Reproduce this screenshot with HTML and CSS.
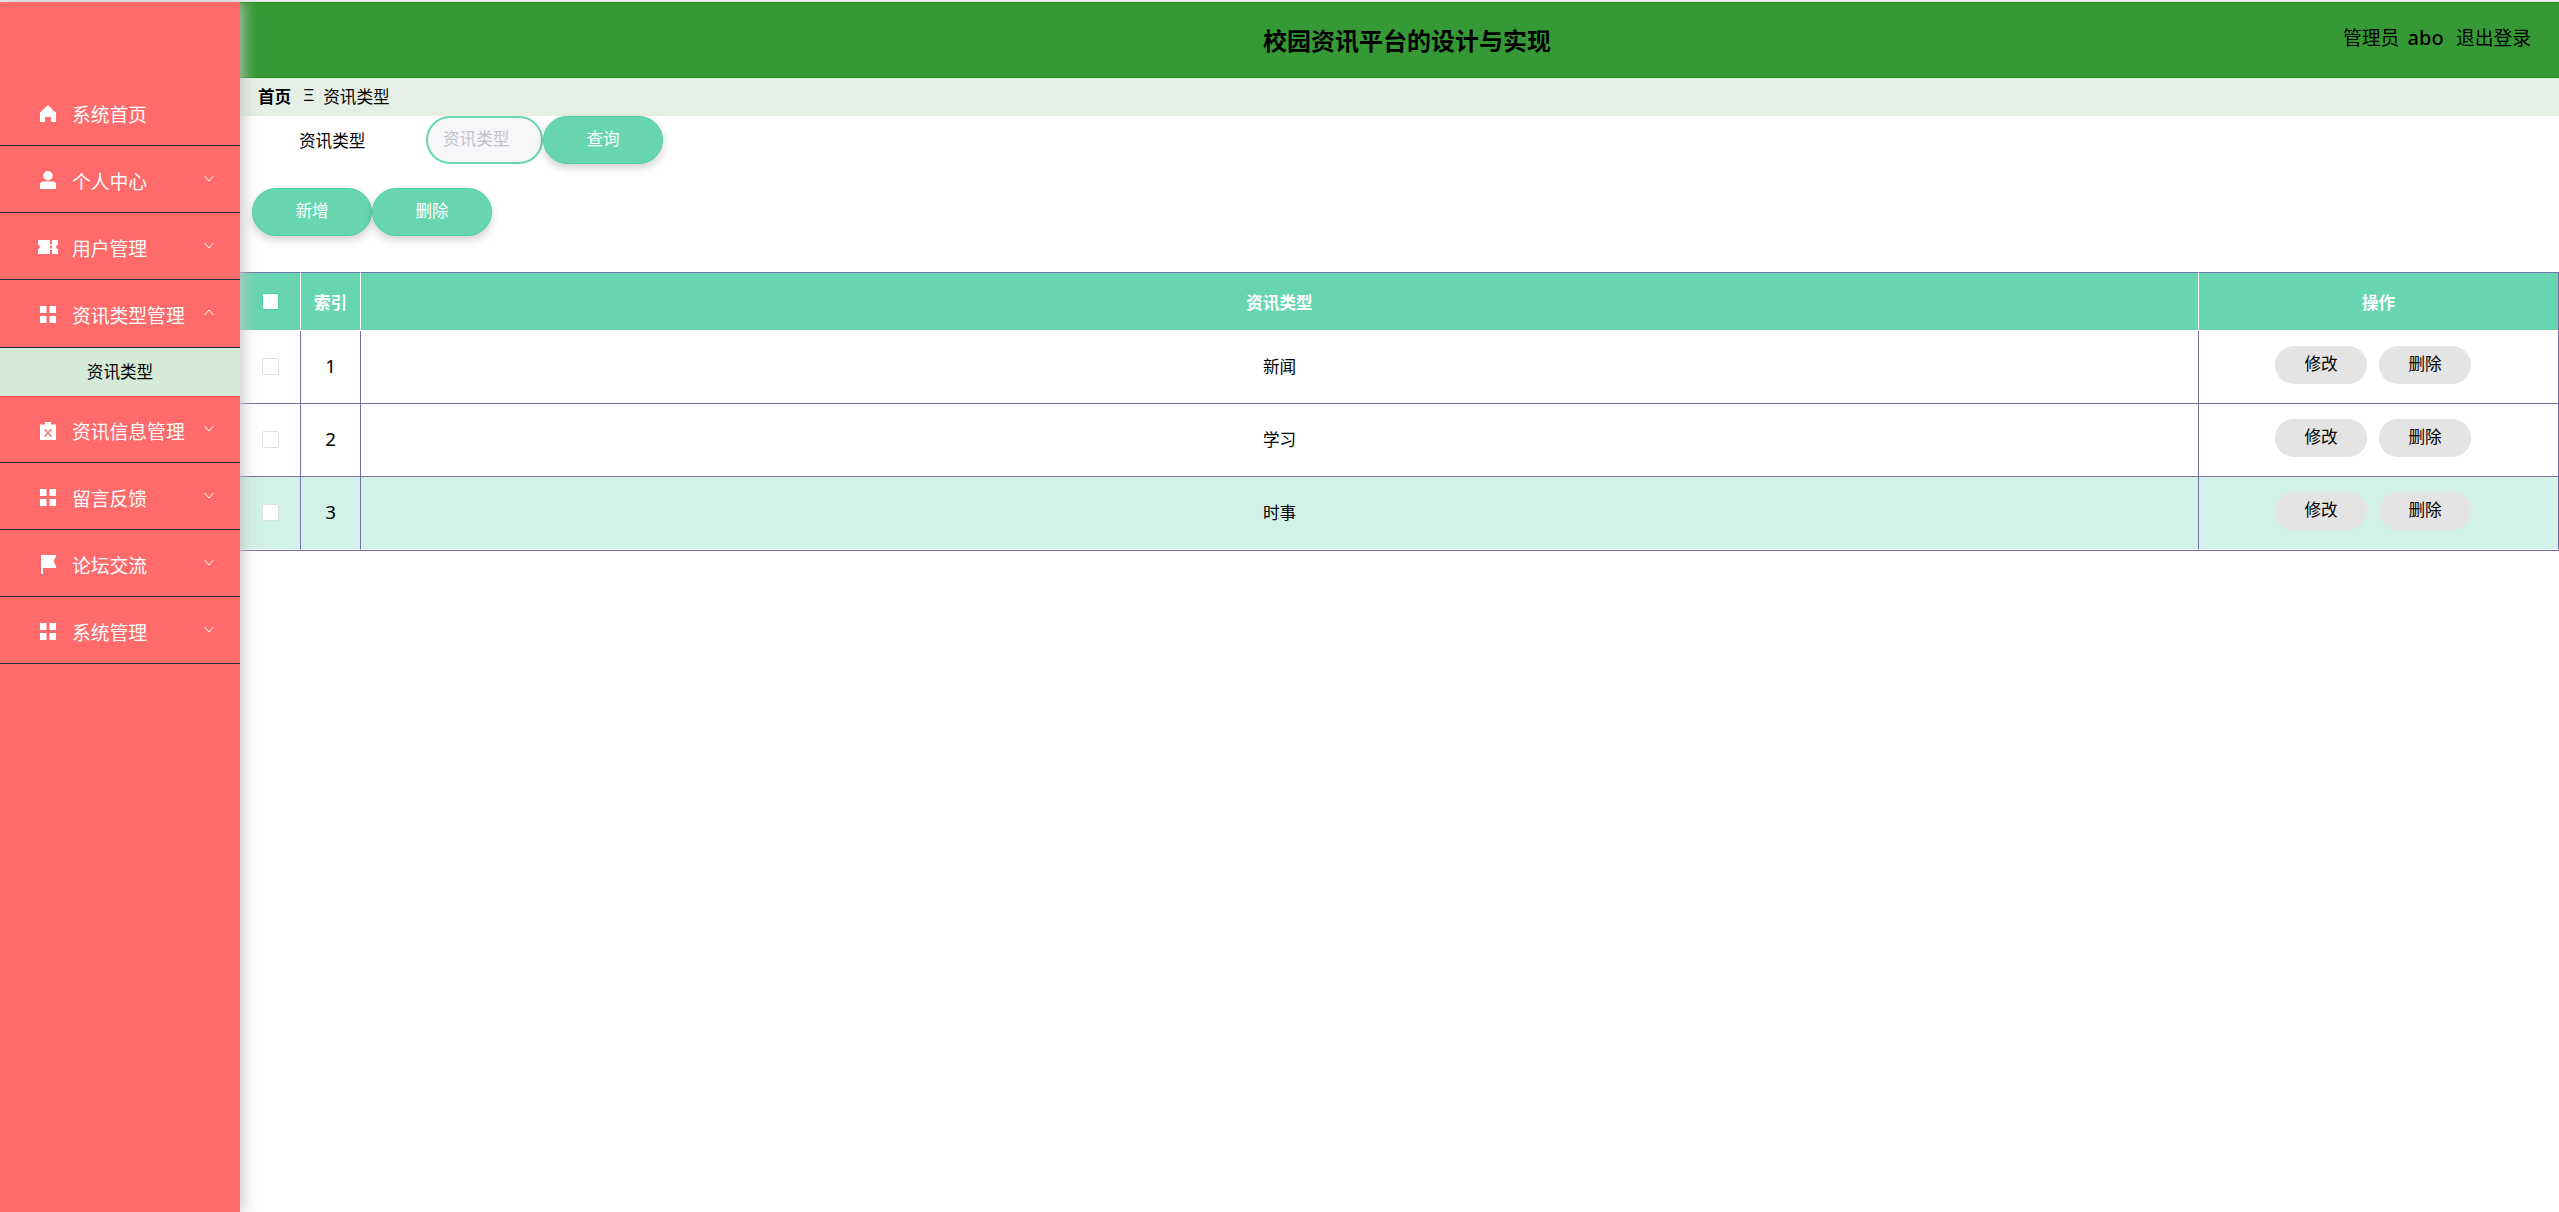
FILE: index.html
```html
<!DOCTYPE html>
<html>
<head>
  <meta charset="UTF-8">
  <link rel="stylesheet" href="styles.css">
</head>
<body>
  <div class="layout">
    <!-- Side menu -->
    <aside class="sidebar">
      <a class="menu-item">
        <svg class="menu-icon icon-17" viewBox="0 0 16 17"><path d="M8 0l2.500 2.500h1V4L16 7.500V17h-5v-5H5v5H0V7.500z"/></svg>
        <span>系统首页</span>
      </a>
      <a class="menu-item">
        <svg class="menu-icon icon-18" viewBox="0 0 16 18"><circle cx="8" cy="4.700" r="4.700"/><path d="M0 18v-4.400C0 11.600 1.600 10.600 3.400 10.600h9.200c1.800 0 3.400 1 3.400 3V18z"/></svg>
        <span>个人中心</span>
        <svg class="chevron" viewBox="0 0 10 7"><path d="M.3.7L5 6l4.700-5.300"/></svg>
      </a>
      <a class="menu-item">
        <svg class="menu-icon icon-ticket" viewBox="0 0 20 14"><path fill-rule="evenodd" d="M0 0h12v4h2V0h6v4.500L17.500 7 20 9.500V14h-6v-4h-2v4H0V9.500L2.500 7 0 4.500zM12 5.500v3h2v-3z"/></svg>
        <span>用户管理</span>
        <svg class="chevron" viewBox="0 0 10 7"><path d="M.3.7L5 6l4.700-5.300"/></svg>
      </a>
      <a class="menu-item open">
        <svg class="menu-icon icon-17" viewBox="0 0 16 17"><path d="M0 0h6.500v7H0zM9.500 0H16v7H9.500zM0 10h6.500v7H0zM9.500 10H16v7H9.500z"/></svg>
        <span>资讯类型管理</span>
        <svg class="chevron" viewBox="0 0 10 7"><path d="M.3 6.300L5 1l4.700 5.300"/></svg>
      </a>
      <a class="submenu-item">资讯类型</a>
      <a class="menu-item">
        <svg class="menu-icon icon-18" viewBox="0 0 16 18"><path fill-rule="evenodd" d="M5 0h6v2.500h5V18H0V2.500h5zM5 6.800L4 7.800 7 11l-3 3.200 1 1 3-3.200 3 3.200 1-1L9 11l3-3.200-1-1L8 10z"/></svg>
        <span>资讯信息管理</span>
        <svg class="chevron" viewBox="0 0 10 7"><path d="M.3.7L5 6l4.700-5.300"/></svg>
      </a>
      <a class="menu-item">
        <svg class="menu-icon icon-17" viewBox="0 0 16 17"><path d="M0 0h6.500v7H0zM9.500 0H16v7H9.500zM0 10h6.500v7H0zM9.500 10H16v7H9.500z"/></svg>
        <span>留言反馈</span>
        <svg class="chevron" viewBox="0 0 10 7"><path d="M.3.7L5 6l4.700-5.300"/></svg>
      </a>
      <a class="menu-item">
        <svg class="menu-icon icon-19" viewBox="0 0 16 19"><path d="M1 0h15v1.500L13.500 6 16 11v2H3v6H1z"/></svg>
        <span>论坛交流</span>
        <svg class="chevron" viewBox="0 0 10 7"><path d="M.3.7L5 6l4.700-5.300"/></svg>
      </a>
      <a class="menu-item">
        <svg class="menu-icon icon-17" viewBox="0 0 16 17"><path d="M0 0h6.500v7H0zM9.500 0H16v7H9.500zM0 10h6.500v7H0zM9.500 10H16v7H9.500z"/></svg>
        <span>系统管理</span>
        <svg class="chevron" viewBox="0 0 10 7"><path d="M.3.7L5 6l4.700-5.300"/></svg>
      </a>
    </aside>

    <main class="main">
      <!-- Top bar -->
      <header class="topbar">
        <div></div>
        <div class="site-title">校园资讯平台的设计与实现</div>
        <div class="user-info">
          <span>管理员</span>
          <b class="user-name">abo</b>
          <span>退出登录</span>
        </div>
      </header>

      <div class="breadcrumb">
        <b>首页</b>
        <span class="crumb-sep">Ξ</span>
        <span>资讯类型</span>
      </div>

      <!-- Search -->
      <div class="search-row">
        <label class="search-label">资讯类型</label>
        <input class="search-input" type="text" placeholder="资讯类型">
        <button class="pill-btn">查询</button>
      </div>

      <div class="action-row">
        <button class="pill-btn">新增</button>
        <button class="pill-btn">删除</button>
      </div>

      <table class="data-table">
        <colgroup>
          <col class="col-check">
          <col class="col-index">
          <col>
          <col class="col-ops">
        </colgroup>
        <thead>
          <tr>
            <th><span class="check head-check"></span></th>
            <th>索引</th>
            <th>资讯类型</th>
            <th>操作</th>
          </tr>
        </thead>
        <tbody>
          <tr>
            <td><span class="check"></span></td>
            <td class="num">1</td>
            <td>新闻</td>
            <td class="ops"><button class="row-btn">修改</button><button class="row-btn">删除</button></td>
          </tr>
          <tr>
            <td><span class="check"></span></td>
            <td class="num">2</td>
            <td>学习</td>
            <td class="ops"><button class="row-btn">修改</button><button class="row-btn">删除</button></td>
          </tr>
          <tr class="row-hover">
            <td><span class="check"></span></td>
            <td class="num">3</td>
            <td>时事</td>
            <td class="ops"><button class="row-btn">修改</button><button class="row-btn">删除</button></td>
          </tr>
        </tbody>
      </table>
    </main>
  </div>
</body>
</html>
```

FILE: styles.css
```css
* {
  box-sizing: border-box;
}
html, body {
  height: 100%;
}
body {
  margin: 0;
  padding-top: 2px;
  background: #ececec;
  overflow: hidden;
  color: #000;
  font-family: "Noto Sans CJK SC", "Noto Sans", sans-serif;
  font-size: 16.6px;
}
.layout {
  display: flex;
  height: 100%;
  background: #fff;
}
.sidebar {
  position: relative;
  z-index: 2;
  flex: 0 0 240px;
  padding-top: 77px;
  background: #ff6b6b;
  box-shadow: 3px 0 14px rgba(195, 195, 195, 0.95);
}
.menu-item {
  display: flex;
  align-items: center;
  height: 67px;
  padding: 2px 26px 0 40px;
  border-bottom: 1px solid #1d2b33;
  color: #fff;
  font-size: 18.8px;
}
.menu-item.open {
  height: 68px;
}
.submenu-item + .menu-item {
  height: 66px;
}
.menu-icon {
  flex: 0 0 16px;
  width: 16px;
  margin-right: 16px;
  fill: #fff;
}
.icon-17 {
  height: 17px;
}
.icon-18 {
  height: 18px;
}
.icon-19 {
  height: 19px;
}
.icon-ticket {
  flex-basis: 20px;
  width: 20px;
  height: 14px;
  margin: 0 14px 0 -2px;
}
.chevron {
  width: 10px;
  height: 7px;
  margin: 0 0 4px auto;
  fill: none;
  stroke: #fff;
  stroke-width: 1;
}
.submenu-item {
  display: block;
  height: 49px;
  background: #d6ebd7;
  border-bottom: 1px solid #ff4d4d;
  line-height: 46px;
  text-align: center;
}
.main {
  flex: 1;
  min-width: 0;
}
.topbar {
  display: grid;
  grid-template-columns: 1fr auto 1fr;
  height: 76px;
  padding-right: 28px;
  background: #359a35;
  border-top: 1px solid #1c8a1c;
  border-bottom: 1px solid #1c8a1c;
}
.site-title {
  margin-left: 43px;
  padding-top: 17px;
  font-size: 24px;
  font-weight: bold;
  line-height: 40px;
}
.user-info {
  justify-self: end;
  padding-top: 17px;
  font-size: 18.8px;
  line-height: 34px;
}
.user-name {
  margin: 0 8px 0 4px;
  font-family: "Noto Sans", sans-serif;
  font-size: 20px;
  font-weight: 500;
}
.breadcrumb {
  display: flex;
  align-items: center;
  height: 38px;
  padding: 0 0 2px 18px;
  background: #e5efe5;
}
.crumb-sep {
  margin: 0 9px 0 12px;
  font-family: "Liberation Sans", sans-serif;
  font-size: 17px;
}
.search-row {
  display: flex;
  align-items: center;
  height: 48px;
}
.search-label {
  width: 186px;
  padding: 0 0 0 59px;
}
.search-input {
  width: 117px;
  height: 48px;
  padding: 0 0 4px 15px;
  background: #f7f6f8;
  border: 2px solid #68d5b1;
  border-radius: 24px;
  outline: none;
  font-family: inherit;
  font-size: 16.6px;
}
.search-input::placeholder {
  color: #c0c4cc;
}
.pill-btn {
  width: 120px;
  height: 48px;
  padding: 0 0 4px;
  background: #68d5b1;
  border: 1px solid #4fcfa6;
  border-radius: 24px;
  box-shadow: 0 4px 8px rgba(0, 0, 0, 0.18);
  color: #fff;
  font-family: inherit;
  font-size: 16.6px;
}
.action-row {
  display: flex;
  height: 84px;
  margin-top: 24px;
  padding-left: 12px;
}
.data-table {
  width: 100%;
  table-layout: fixed;
  border-collapse: separate;
  border-spacing: 0;
  border-bottom: 1px solid #7570a8;
}
.col-check {
  width: 61px;
}
.col-index {
  width: 60px;
}
.col-ops {
  width: 360px;
}
.data-table th {
  height: 59px;
  padding: 0;
  background: #68d5b1;
  border-top: 1px solid #7570a8;
  border-right: 1px solid #fff;
  border-bottom: 1px solid #fff;
  color: #fff;
  font-weight: bold;
}
.data-table td {
  height: 73px;
  padding: 0 0 2px;
  border-right: 1px solid #7570a8;
  border-bottom: 1px solid #7570a8;
  text-align: center;
}
.data-table tr:last-child td {
  border-bottom-color: #fff;
}
.data-table th:last-child {
  border-right-color: #7570a8;
}
.row-hover td {
  background: #d3f2e7;
}
.data-table .num {
  font-family: "Noto Sans", sans-serif;
  font-size: 18.8px;
}
.check {
  display: block;
  width: 17px;
  height: 17px;
  margin: 0 0 0 22px;
  background: #fff;
  border: 1px solid #dcdfe6;
  border-radius: 2px;
}
.head-check {
  border-color: #4fcfa6;
}
.data-table .ops {
  padding-right: 11px;
  vertical-align: top;
}
.row-btn {
  width: 92px;
  height: 38px;
  margin: 15px 6px 0;
  padding: 0 0 4px;
  background: #e4e4e4;
  border: none;
  border-radius: 19px;
  font-family: inherit;
  font-size: 16.6px;
}
```
